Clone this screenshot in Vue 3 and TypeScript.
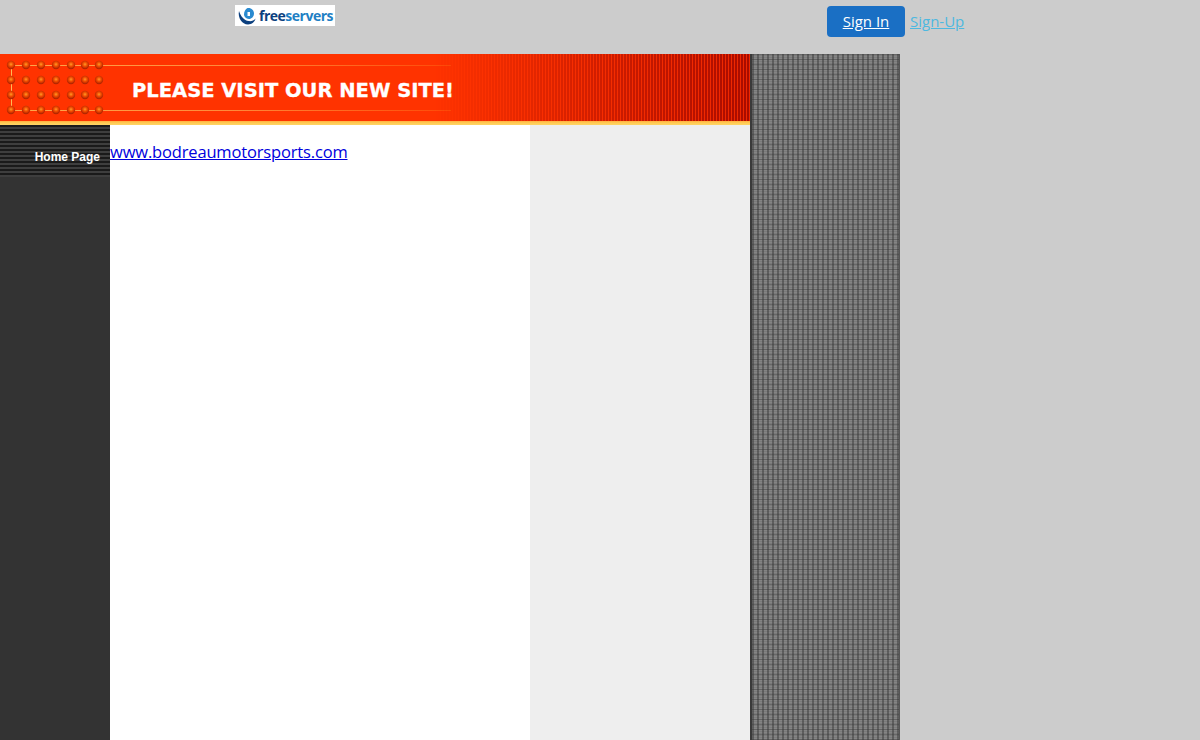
<script setup lang="ts">
const dotX: number[] = [11, 26, 41, 56, 71, 85, 99]
const dotY: number[] = [65, 80, 95, 110]
</script>

<template>
  <div class="page">
    <header class="top">
      <a class="logo" href="#">
        <svg class="logo-mark" width="20" height="20" viewBox="0 0 20 20">
          <path d="M2 5C0.500 11.500 5 18.500 11 18.500c3.800 0 7-2.800 7.500-6-1.600 2-4.200 3.100-6.800 2.600C7 14.200 3.800 10.500 2 5Z" fill="#0b3f7e" />
          <path d="M10.500 2c3.800-.5 6.500 2.200 6.500 5.500 0 3-2.400 5.500-5.200 5.500-2.700 0-4.800-2.200-4.800-4.700C7 5.400 8.600 3.100 10.500 2Z" fill="#2a8ad0" />
          <path d="M10.500 6h2.500v4h-2.500Z" fill="#fff" />
        </svg>
        <span class="logo-text"><span class="free">free</span><span class="servers">servers</span></span>
      </a>
      <div class="auth">
        <a class="signin" href="#">Sign In</a>
        <a class="signup" href="#">Sign-Up</a>
      </div>
    </header>

    <div class="frame">
      <div class="site">
        <div class="banner">
          <svg class="banner-art" width="750" height="67" viewBox="0 54 750 67">
            <defs>
              <radialGradient id="dot" cx="50%" cy="42%" r="52%">
                <stop offset="0" stop-color="#ff9a24" />
                <stop offset="0.5" stop-color="#f04a00" />
                <stop offset="1" stop-color="#b02400" />
              </radialGradient>
              <linearGradient id="fade" x1="0" x2="1" y1="0" y2="0">
                <stop offset="0" stop-color="#ffa84a" />
                <stop offset="0.5" stop-color="#ff8a3a" />
                <stop offset="1" stop-color="#ff4a08" />
              </linearGradient>
            </defs>
            <rect x="11" y="65" width="440" height="1" fill="url(#fade)" />
            <rect x="11" y="110" width="440" height="1" fill="url(#fade)" />
            <rect x="11" y="65" width="1" height="45" fill="#ffbb55" />
            <template v-for="y in dotY" :key="y">
              <circle v-for="x in dotX" :key="x" :cx="x" :cy="y" r="4.200" fill="url(#dot)" />
            </template>
          </svg>
          <h1 class="banner-title">PLEASE VISIT OUR NEW SITE!</h1>
        </div>
        <div class="rule"></div>
        <div class="columns">
          <nav class="side">
            <a class="nav-item" href="#">Home Page</a>
          </nav>
          <main class="content">
            <a class="site-link" href="#">www.bodreaumotorsports.com</a>
          </main>
          <aside class="extra"></aside>
        </div>
      </div>
      <div class="texture"></div>
    </div>
  </div>
</template>

<style>
html,
body {
  margin: 0;
  background: #cccccc;
}
</style>

<style scoped>
.page {
  width: 1200px;
  height: 740px;
  overflow: hidden;
  background: #cccccc;
  display: flex;
  flex-direction: column;
}

.top {
  height: 54px;
  flex: none;
  display: flex;
  align-items: flex-start;
  padding: 5px 0 0 235px;
  box-sizing: border-box;
}

.logo {
  width: 100px;
  height: 21px;
  background: #ffffff;
  display: flex;
  align-items: center;
  gap: 2px;
  padding-left: 2px;
  box-sizing: border-box;
  text-decoration: none;
  overflow: hidden;
}

.logo-mark {
  flex: none;
}

.logo-text {
  font-family: "Open Sans", sans-serif;
  font-size: 14px;
  font-weight: 700;
  letter-spacing: -0.5px;
  line-height: 21px;
}

.free {
  color: #0b3f7e;
}

.servers {
  color: #1f7fc4;
}

.auth {
  margin-left: 492px;
  margin-top: 1px;
  display: flex;
  align-items: flex-start;
  gap: 5px;
  font-family: "Open Sans", sans-serif;
  font-size: 15px;
  line-height: 20px;
}

.signin {
  width: 78px;
  height: 31px;
  padding-bottom: 2px;
  box-sizing: border-box;
  border-radius: 4px;
  background: #1a6fc4;
  color: #ffffff;
  display: flex;
  align-items: center;
  justify-content: center;
  text-decoration: underline;
}

.signup {
  margin-top: 5px;
  color: #4db8e0;
  text-decoration: underline;
}

.frame {
  flex: 1;
  width: 900px;
  display: flex;
  min-height: 0;
}

.site {
  width: 750px;
  display: flex;
  flex-direction: column;
}

.banner {
  height: 67px;
  flex: none;
  position: relative;
  background: #ff3300;
  display: flex;
  align-items: center;
  padding: 5px 0 0 132px;
  box-sizing: border-box;
}

.banner::after {
  content: "";
  position: absolute;
  inset: 0;
  background: repeating-linear-gradient(90deg, #a80c00 0 2px, #ee2800 2px 3px);
  -webkit-mask-image: linear-gradient(90deg, transparent 58%, rgba(0, 0, 0, 0.6) 82%, #000 100%);
  mask-image: linear-gradient(90deg, transparent 58%, rgba(0, 0, 0, 0.6) 82%, #000 100%);
}

.banner-art {
  position: absolute;
  left: 0;
  top: 0;
}

.banner-title {
  position: relative;
  z-index: 1;
  margin: 0;
  font-family: "DejaVu Sans", Verdana, sans-serif;
  font-size: 19.5px;
  font-weight: 700;
  -webkit-text-stroke: 0.3px #ffffff;
  color: #ffffff;
  white-space: nowrap;
}

.rule {
  height: 4px;
  flex: none;
  background: linear-gradient(180deg, #ffb040 0, #ffcc55 50%, #ffd466 100%);
}

.columns {
  flex: 1;
  display: flex;
  min-height: 0;
}

.side {
  width: 110px;
  flex: none;
  background: #333333;
}

.nav-item {
  height: 52px;
  display: flex;
  align-items: center;
  justify-content: flex-end;
  padding: 12px 10px 0 0;
  box-sizing: border-box;
  background: repeating-linear-gradient(180deg, #1a1a1a 0 2px, #3e3e3e 2px 4px);
  color: #ffffff;
  font-family: "Liberation Sans", Arial, sans-serif;
  font-size: 12px;
  font-weight: 700;
  text-decoration: none;
}

.content {
  width: 420px;
  flex: none;
  background: #ffffff;
  padding-top: 15px;
  box-sizing: border-box;
}

.site-link {
  font-family: "Open Sans", sans-serif;
  font-size: 16.5px;
  letter-spacing: -0.16px;
  color: #0000dd;
  text-decoration: underline;
}

.extra {
  flex: 1;
  background: #eeeeee;
}

.texture {
  width: 150px;
  flex: none;
  box-sizing: border-box;
  border-left: 2px solid #3a3a3a;
  border-right: 1px solid #555555;
  background-color: #7a7a7a;
  background-image:
    repeating-linear-gradient(90deg, rgba(50, 50, 50, 0.45) 0 2px, transparent 2px 5px),
    repeating-linear-gradient(180deg, rgba(50, 50, 50, 0.35) 0 1px, transparent 1px 5px),
    repeating-linear-gradient(180deg, rgba(255, 255, 255, 0.08) 0 1px, transparent 1px 2px);
}
</style>
